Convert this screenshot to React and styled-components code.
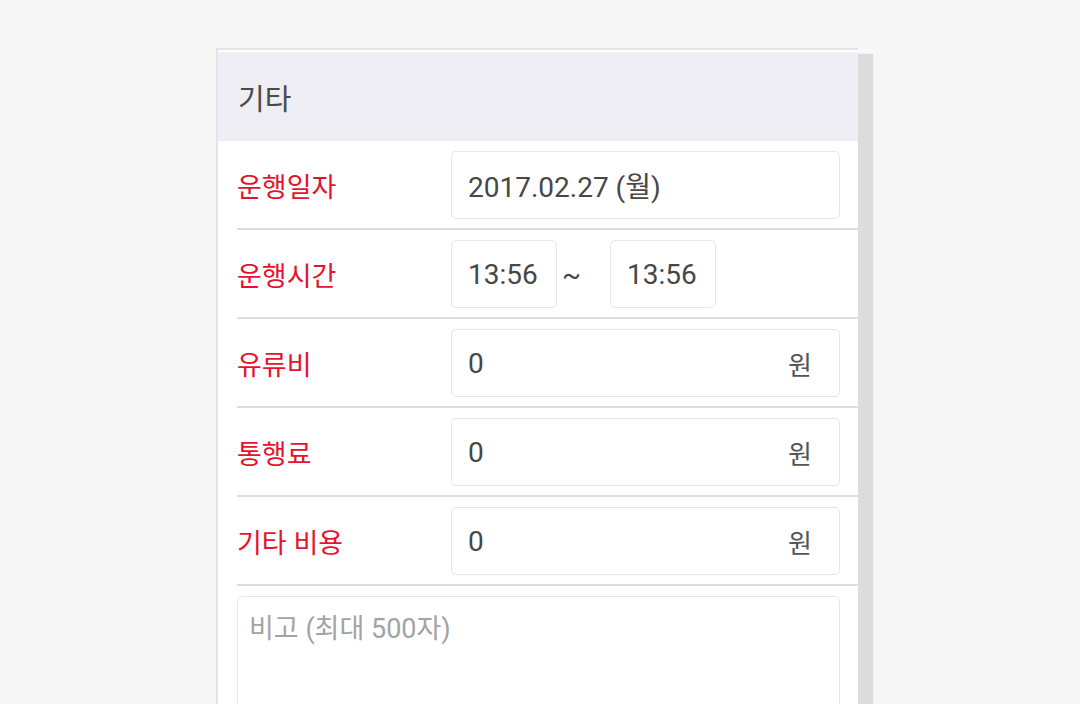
import React from "react";
import styled, { createGlobalStyle } from "styled-components";

const GlobalStyle = createGlobalStyle`
  body {
    margin: 0;
    background: #f7f7f7;
    font-family: Roboto, "Noto Sans CJK KR", sans-serif;
  }
`;

const Page = styled.div`
  padding: 48px 0 0 216px;
  height: 704px;
  box-sizing: border-box;
  overflow: hidden;
`;
const Card = styled.div`
  width: 642px;
  box-sizing: border-box;
  background: #fff;
  border-top: 2px solid #e4e4e4;
  border-left: 2px solid #e4e4e4;
  padding-top: 2px;
  box-shadow: 15px 6px 1px #dcdcdc;
  min-height: 700px;
`;
const Header = styled.div`
  height: 89px;
  display: flex;
  align-items: center;
  padding-left: 20px;
  background: #eeeef4;
  color: #4a4a4a;
  font-size: 29px;
`;
const Row = styled.div`
  display: flex;
  align-items: center;
  margin-left: 19px;
  padding: 10px 18px 9px 0;
  border-bottom: 2px solid #d8dfe2;
`;
const Label = styled.div`
  width: 214px;
  flex-shrink: 0;
  color: #e5132d;
  font-size: 27px;
`;
const Field = styled.div`
  display: flex;
  align-items: center;
  justify-content: space-between;
  box-sizing: border-box;
  width: ${(p) => (p.$small ? "106px" : "389px")};
  height: 68px;
  padding: 0 27px 0 16px;
  border: 1px solid #e3e7ea;
  border-radius: 5px;
  color: #474747;
  font-size: 28px;
`;
const Unit = styled.span`
  color: #555;
  font-size: 26px;
`;
const Tilde = styled.span`
  margin: 0 29px 0 5px;
  color: #474747;
  font-size: 28px;
`;
const NoteWrap = styled.div`
  margin-left: 19px;
  padding: 10px 18px 0 0;
`;
const Note = styled.textarea`
  display: block;
  width: 100%;
  height: 140px;
  box-sizing: border-box;
  padding: 10px 11px;
  border: 1px solid #e3e7ea;
  border-radius: 5px;
  resize: none;
  font-family: Roboto, "Noto Sans CJK KR", sans-serif;
  font-size: 27px;
  color: #444;
  &::placeholder {
    color: #a3a3a3;
  }
`;

const costs = [
  { label: "유류비", value: "0" },
  { label: "통행료", value: "0" },
  { label: "기타 비용", value: "0" },
];

const App = () => (
  <>
    <GlobalStyle />
    <Page>
      <Card>
        <Header>기타</Header>
        <Row>
          <Label>운행일자</Label>
          <Field>2017.02.27 (월)</Field>
        </Row>
        <Row>
          <Label>운행시간</Label>
          <Field $small>13:56</Field>
          <Tilde>~</Tilde>
          <Field $small>13:56</Field>
        </Row>
        {costs.map((c) => (
          <Row key={c.label}>
            <Label>{c.label}</Label>
            <Field>
              {c.value}
              <Unit>원</Unit>
            </Field>
          </Row>
        ))}
        <NoteWrap>
          <Note placeholder="비고 (최대 500자)" />
        </NoteWrap>
      </Card>
    </Page>
  </>
);

export default App;
